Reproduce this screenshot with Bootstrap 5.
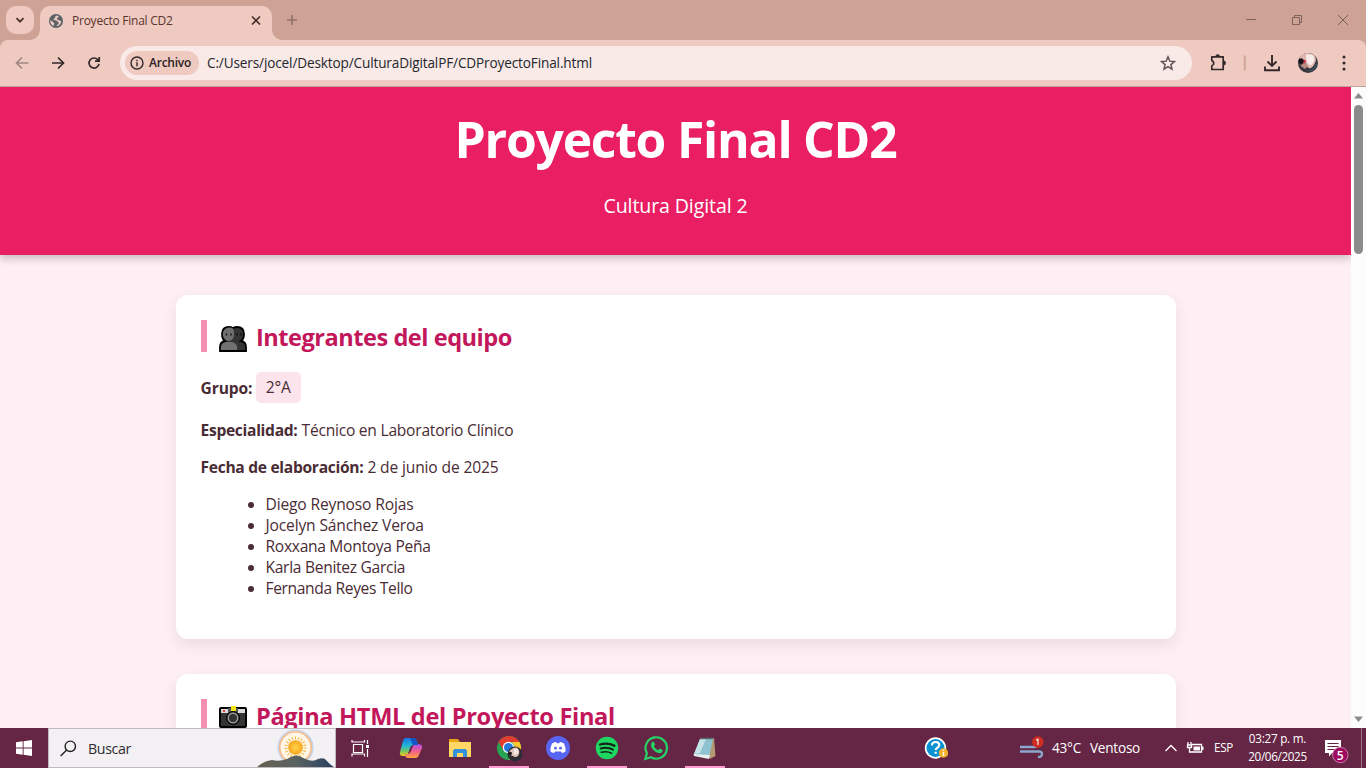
<!DOCTYPE html>
<html lang="es">
<head>
<meta charset="utf-8">
<title>Proyecto Final CD2</title>
<link rel="stylesheet" href="https://cdn.jsdelivr.net/npm/bootstrap@5.3.0/dist/css/bootstrap.min.css">
<style>
body{font-family:"Open Sans","Noto Sans",sans-serif;width:1366px;height:768px;overflow:hidden;color:#4a2c35;font-size:15.6px;line-height:21px}
svg{display:block;flex:none}
.fit{white-space:nowrap;display:inline-block}
.t12{letter-spacing:-.12px}
.t15{letter-spacing:-.155px}
.t24{letter-spacing:-.24px}
.t30{letter-spacing:-.3px}
.t36{letter-spacing:-.36px}
.tabstrip{height:40px;background:#cea396;padding-left:6px}
.tab-search{width:28px;height:28px;border-radius:10px;background:#eecac1;margin-top:6px}
.browser-tab{width:232px;height:34px;margin:6px 0 0 6px;background:#eecac1;border-radius:10px 10px 0 0;padding:0 10px 5px 9px;font-size:12px;color:#5b342d;position:relative}
.browser-tab .fit{margin-left:9px}
.browser-tab:before,.browser-tab:after{content:"";position:absolute;bottom:0;width:10px;height:10px}
.browser-tab:before{left:-10px;background:radial-gradient(circle at 0 0,transparent 9.5px,#eecac1 10px)}
.browser-tab:after{right:-10px;background:radial-gradient(circle at 100% 0,transparent 9.5px,#eecac1 10px)}
.new-tab{margin:14px 0 0 14px}
.toolrow{height:47px;background:#eecac1;border-bottom:1px solid #bfa29b;border-radius:8px 8px 0 0}
.strip-bg{background:#cea396}
.omnibox{width:1072px;height:34px;border-radius:17px;background:#f9eae8;font-size:13.6px;color:#23262c;padding:0 16px 0 5px}
.url{margin-left:8px;letter-spacing:-.14px;padding-bottom:1px}
.chip{width:74px;height:24px;border-radius:12px;background:#eecac1;font-size:12px;font-weight:600;color:#2b2123;padding-left:5px}
.chip .fit{margin-left:5px;padding-bottom:1px}
.viewport{height:641px;background:#feeff4}
.content{width:1351px;overflow:hidden}
.hero{height:168px;margin-bottom:40px;background:#ea1e63;color:#fff;box-shadow:0 4px 8px rgba(0,0,0,.2)}
.hero h1{font-size:49.8px;font-weight:700;line-height:68px;margin:0;padding-top:18px;letter-spacing:-1.22px}
.hero p{font-size:19.6px;line-height:28px;margin:19px 0 0}
.sheet{width:1000px;background:#fff;border-radius:12px;padding:25px;margin:0 auto 35px;box-shadow:0 6px 15px rgba(0,0,0,.08)}
.sheet h2{border-left:6px solid #f48fb1;height:32px;padding-left:12px;margin:0 0 20px;font-size:23.6px;font-weight:700;color:#c2185b;line-height:35px}
.sheet h2 .team{letter-spacing:-.484px}
.sheet h2 .pagina{letter-spacing:-.328px}
.sheet h2 svg{margin:6px 9.4px 0 0}
.sheet p{margin:0 0 16px}
.sheet b{font-weight:700}
.grp-row{height:32px}
.grp{background:#fce4ec;border-radius:5px;height:31px;width:45px;margin:0 0 1px 3.4px}
.sheet ul{padding-left:65px;margin:0 0 15px}
.scroller{width:15px;background:#fcfcfc}
.thumb{width:9px;height:149px;border-radius:5px;background:#8b8b8b}
.taskbar{height:40px;background:#652544;color:#fff}
.searchbox{width:288px;background:#f3f1f3;border:1px solid #bdb9bd;color:#2e2b30;font-size:14.2px;padding-left:11px}
.searchbox .fit{margin-left:11px}
.app{width:49px;height:40px;position:relative}
.app.open:after{content:"";position:absolute;left:5px;bottom:0;width:40px;height:2px;background:#ff9bd2}
.wind{margin-left:71px}
.weather{font-size:13.6px;margin-left:7px;width:112px;gap:9px;padding-bottom:1px}
.lang{font-size:11.7px;width:34px;padding-bottom:1px}
.clock{font-size:11.7px;line-height:18px;width:59px;padding-top:1px}
</style>
<script src="https://cdn.jsdelivr.net/npm/bootstrap@5.3.0/dist/js/bootstrap.bundle.min.js"></script>
</head>
<body>
<div class="tabstrip d-flex">
  <div class="tab-search d-flex align-items-center justify-content-center"><svg width="10" height="10" fill="none" stroke="#4b302b" stroke-width="1.8"><path d="M1.5 3.2 5 6.7 8.500 3.200"/></svg></div>
  <div class="browser-tab d-flex align-items-center">
    <svg width="14" height="14" viewBox="0 0 14 14"><circle cx="7" cy="7" r="7" fill="#5c6268"/><path d="M7.800 1.500c-.5 1-2.300 1-2 2.400.2 1-1.600 1-1.600 2.100 1 .7 3.100-.2 3.800 1 .5 1 1.800.7 1.700 1.900-.2 1.500-1.800 1.600-2.300 3.400 2.500-.2 4.800-2.300 4.900-5.200-1.200.3-1.500-.8-2.600-1-1.300-.2-2-.7-1.700-1.800.3-1 1.800-.6 1.800-1.900-.7-.6-1.200-.9-2-.9ZM1.400 6.200c.8.4 1.700.6 2.200 1.500.6.9 1.600.8 1.600 1.900 0 .9-.6 1.400-.4 2.500C2.500 11.300 1 8.900 1.400 6.200Z" fill="#eecac1"/></svg>
    <span class="fit t24">Proyecto Final CD2</span>
    <svg class="ms-auto" width="12" height="12" fill="none" stroke="#4b302b" stroke-width="1.700"><path d="m2 1.500 8 8M10 1.500l-8 8"/></svg>
  </div>
  <svg class="new-tab" width="12" height="12" stroke="#927169" stroke-width="1.600"><path d="M6 1v10M1 6h10"/></svg>
  <svg class="ms-auto" width="126" height="40" fill="none" stroke="#7c625b" stroke-width="1"><path d="M6 19.500h10M52.500 17.500h7v7h-7zM54.500 17.500v-2h7v7h-2M98 15l10 10M108 15 98 25"/></svg>
</div>
<div class="strip-bg"><div class="toolrow d-flex align-items-center">
  <svg width="120" height="46" fill="none" stroke="#33282a" stroke-width="1.700"><path d="M28.500 23H17M22 17.500 16.500 23l5.500 5.500" stroke="#a18984"/><path d="M52 23h11.500M58 17.500l5.500 5.500-5.500 5.500"/><path d="M98.200 20.200A5 5 0 1 0 99 23.800M99.200 17v4.200H95"/></svg>
  <div class="omnibox d-flex align-items-center">
    <div class="chip d-flex align-items-center"><svg width="14" height="14" fill="none" stroke="#33282a" stroke-width="1.400"><circle cx="7" cy="7" r="6"/><path d="M7 6.200v4M7 3.700v1.500"/></svg><span class="fit t24">Archivo</span></div>
    <span class="fit url">C:/Users/jocel/Desktop/CulturaDigitalPF/CDProyectoFinal.html</span>
    <svg class="ms-auto" width="16" height="16" fill="none" stroke="#5a5053" stroke-width="1.400"><path d="m8 1.800 1.800 4.300 4.700.4-3.600 3.100 1.100 4.600-4-2.500-4 2.500 1.100-4.600-3.600-3.100 4.700-.4Z"/></svg>
  </div>
  <svg width="174" height="46" viewBox="1192 40 174 46" fill="none"><path d="M1211.800 56.800h11.400v12.700h-11.400v-3.700a2.700 2.700 0 0 0 0-5.200Z" stroke="#33282a" stroke-width="1.700" stroke-linejoin="round"/><path d="M1215.700 56.500a2 2 0 0 1 4 0zM1223.500 60.800a2.200 2.200 0 0 1 0 4.400z" fill="#33282a" stroke="#33282a" stroke-width=".5"/><path d="M1244.800 55.500v15" stroke="#d4a69b" stroke-width="2"/><path d="M1272 55v11M1267.500 61.500l4.500 4.500 4.500-4.500M1265 66.500v3.800h14v-3.800" stroke="#33282a" stroke-width="1.900"/><circle cx="1308" cy="63" r="10" fill="#38383e"/><path d="M1300 57q3-4 8-4 8 1 8 7-1 5-5 8-3 1-4-2-5 1-7-3Z" fill="#dfb6b0"/><path d="M1306 54.500q8-1 8.500 4-.5 6-4.500 7-4-2-4-11" fill="#f8eae7"/><path d="M1300 64l5-3 3 5-3 3q-4-2-5-5" fill="#b98c84"/><path d="M1298 61q2-4 5-2l2 3-4 3Z" fill="#151318"/><path d="M1304 59.500l2 1-1 3-2-1z" fill="#c5304c"/><path d="M1307 71q8-1 9-9l1 4q-3 6-10 5" fill="#395064"/><g fill="#33282a"><circle cx="1344" cy="57" r="1.500"/><circle cx="1344" cy="63" r="1.500"/><circle cx="1344" cy="69" r="1.500"/></g></svg>
</div></div>
<div class="viewport d-flex overflow-hidden">
  <main class="content">
    <header class="hero text-center"><h1>Proyecto Final CD2</h1><p><span class="fit t12">Cultura Digital 2</span></p></header>
    <section class="sheet">
      <h2 class="d-flex"><svg width="28" height="26" viewBox="0 0 28 26"><path d="M1 25v-4q0-5 5-6-3-2-3-7 0-7 7-7 2 0 4 1 2-1 4-1 7 0 7 7 0 5-3 7 5 1 5 6v4Z" fill="#343434" stroke="#000" stroke-width="1.800"/><path d="M13.500 2Q10 .8 7 2.500 3 5 4 10q2 5 6 5 5-1 5-7 0-4-1.500-6M2 24q-1-7 5-8h6q6 1 5 8Z" fill="#707070"/><path d="M7.500 7.500v2M12 7.500v2M18 7.500v2M22 7.500v2" stroke="#111" stroke-width="1.500"/></svg><span class="fit team">Integrantes del equipo</span></h2>
      <p class="d-flex align-items-center grp-row"><b class="fit t12">Grupo:</b><span class="grp d-flex align-items-center justify-content-center"><span class="fit t15">2°A</span></span></p>
      <p><b class="fit t30">Especialidad:</b> <span class="fit t24">Técnico en Laboratorio Clínico</span></p>
      <p><b class="fit t30">Fecha de elaboración:</b> <span class="fit t15">2 de junio de 2025</span></p>
      <ul><li><span class="fit t15">Diego Reynoso Rojas</span></li><li><span class="fit t15">Jocelyn Sánchez Veroa</span></li><li><span class="fit t30">Roxxana Montoya Peña</span></li><li><span class="fit t30">Karla Benitez Garcia</span></li><li><span class="fit t36">Fernanda Reyes Tello</span></li></ul>
    </section>
    <section class="sheet">
      <h2 class="d-flex"><svg width="28" height="23" viewBox="0 -1 28 23"><rect x="1" y="2" width="26" height="19" rx="1" fill="#353535" stroke="#000" stroke-width="2"/><path d="M2 3h24v4H2z" fill="#d8d8d8"/><path d="M9 2h10v5H9z" fill="#555"/><path d="M12 0h5v5h-5z" fill="#f4e51b"/><path d="M4 4h2v2H4z" fill="#e34545"/><circle cx="14" cy="12" r="6.500" fill="#222" stroke="#050505"/><circle cx="14" cy="12" r="4.800" fill="#333" stroke="#aaa" stroke-width="1.200"/></svg><span class="fit pagina">Página HTML del Proyecto Final</span></h2>
    </section>
  </main>
  <div class="scroller d-flex flex-column align-items-center"><svg width="15" height="18"><path d="M3 11.500h9L7.500 6Z" fill="#8b8b8b"/></svg><div class="thumb"></div><svg class="mt-auto" width="15" height="18"><path d="M3 6.500h9L7.500 12Z" fill="#8b8b8b"/></svg></div>
</div>
<footer class="taskbar d-flex">
  <svg width="48" height="40" fill="#fff"><path d="m16 14.300 6.700-1v6.300H16zM23.600 13.200 32 12v7.600h-8.400zM16 20.500h6.700v6.300l-6.700-1zM23.600 20.500H32V28l-8.400-1.200z"/></svg>
  <div class="searchbox d-flex align-items-center"><svg width="17" height="17" fill="none" stroke="#222" stroke-width="1.400"><circle cx="10.300" cy="6.300" r="5.200"/><path d="m6.600 10-6 6"/></svg><span class="fit t36">Buscar</span>
    <svg class="ms-auto" width="80" height="38" viewBox="255 729 80 38"><defs><linearGradient id="hill"><stop stop-color="#66604f"/><stop offset=".5" stop-color="#596260"/><stop offset="1" stop-color="#243f62"/></linearGradient><radialGradient id="sun"><stop stop-color="#ffd34c"/><stop offset="1" stop-color="#f8a51d"/></radialGradient></defs><circle cx="295.500" cy="747.500" r="17.300" fill="#fdf3df" stroke="#c4d4ee" stroke-width="1.500"/><circle cx="295.500" cy="747.500" r="15.800" fill="#fff6e8" stroke="#f3b988" stroke-width="1.600"/><circle cx="295.500" cy="747.500" r="9.500" fill="none" stroke="#f6b335" stroke-width="3" stroke-dasharray="1 2.140"/><circle cx="295.500" cy="747.500" r="7.300" fill="url(#sun)"/><path d="M256 768q7-7 16-8 7 2 15-1 8-5 12-3l9 4q6 2 10-1 6-2 8 1 5 6 10 8Z" fill="url(#hill)"/></svg></div>
  <svg width="50" height="40" fill="none" stroke="#fff" stroke-width="1.200"><path d="M17.500 16.500h9v8h-9zM16 12v2h12.500v-2M16 28.500V26h12.500v2.500M31.500 12v4M31.500 21v8"/><path d="M30 17h3v3h-3z" fill="#fff" stroke="none"/></svg>
  <div class="app"><svg width="49" height="40" viewBox="386 728 49 40"><defs><linearGradient id="ca" x2="0" y2="1"><stop stop-color="#1976e7"/><stop offset=".45" stop-color="#22b8d5"/><stop offset=".75" stop-color="#7cc75a"/><stop offset="1" stop-color="#f8c71a"/></linearGradient><linearGradient id="cb" x2="0" y2="1"><stop stop-color="#a94fe8"/><stop offset=".5" stop-color="#f15d91"/><stop offset="1" stop-color="#ffa33d"/></linearGradient></defs><path d="M405 738h9q2 0 3 4l1 3h-5q-2 0-3 3l-2 6q-1 2-3 2h-2q-4 0-3-4l3-11q1-3 2-3" fill="url(#ca)"/><path d="M416 758h-8q-3 0-3-4h3q2 0 3-3l2-5q1-2 4-2h2q4 1 3 4l-3 7q-1 3-3 3" fill="url(#cb)"/><path d="M410 738h4q2 0 3 4l1 3h-5Z" fill="#1455c5"/></svg></div>
  <div class="app"><svg width="49" height="40" viewBox="435 728 49 40"><path d="M449 739h9l2 3h10v12h-21z" fill="#e6a414"/><path d="M449 742h22v15h-22z" fill="#ffd765"/><path d="M453 757v-6q0-2 2-2h10q2 0 2 2v6h-4v-4h-6v4Z" fill="#3592da"/></svg></div>
  <div class="app open"><svg width="49" height="40" viewBox="484 728 49 40"><circle cx="509" cy="748" r="12" fill="#28a353"/><path d="M498.600 742A12 12 0 0 1 519.400 742H509l-5.200 9Z" fill="#e43c2e"/><path d="M519.400 742A12 12 0 0 1 509 760l5.200-9Q516 746 512 742Z" fill="#fbc92e"/><circle cx="508.500" cy="747.500" r="5.700" fill="#fff"/><circle cx="508.500" cy="747.500" r="4.500" fill="#2477df"/><circle cx="515" cy="754" r="7.500" fill="#302d34"/><path d="M509 752q3-5 8-4.500 4 4 1 8.500-3 2-5 0l-4-1" fill="#e1c4b8"/><path d="M514 748.500q5 0 4 4-2 3-4 2z" fill="#f6e9e4"/><path d="M508 754q2-4 4-1l-1 3Z" fill="#17151a"/></svg></div>
  <div class="app"><svg width="49" height="40" viewBox="533 728 49 40"><circle cx="558" cy="748" r="12" fill="#5865f2"/><path d="M552 743.500q2-1.500 4-1.500l.7 1.200h2.600L560 742q2 0 4 1.500 2 4 1.500 8-1.500 1.200-3.500 1.500l-1-1.500h-6l-1 1.500q-2-.3-3.500-1.500-.5-4 1.500-8" fill="#fff"/><circle cx="555.500" cy="748.200" r="1.400" fill="#5865f2"/><circle cx="560.500" cy="748.200" r="1.400" fill="#5865f2"/></svg></div>
  <div class="app open"><svg width="49" height="40" viewBox="582 728 49 40" fill="none" stroke="#152318" stroke-linecap="round"><circle cx="607" cy="748" r="11.200" fill="#1ed760" stroke="none"/><path d="M600 744.500q8-2.200 14.500 1.300" stroke-width="2.300"/><path d="M600.700 748.500q7-1.800 12.300 1.200" stroke-width="1.900"/><path d="M601.300 752.200q6-1.400 10.300 1" stroke-width="1.600"/></svg></div>
  <div class="app"><svg width="49" height="40" viewBox="631 728 49 40"><path d="m645.300 759 1.600-5.800A10.700 10.700 0 1 1 651 757.300Z" fill="none" stroke="#27d366" stroke-width="2.200"/><path d="M652 742q1-1 2 .1l1.100 2.600-1.200 1.600q1.500 2.900 4.300 4l1.500-1.800 3 1.400q0 3-3.200 3.300-4-.4-6.800-4-3-3.500-.7-7.200" fill="#27d366"/></svg></div>
  <div class="app open"><svg width="49" height="40" viewBox="680 728 49 40"><path d="m701 739 13-1 1.500 18-5.500 3Z" fill="#b39a72"/><path d="m700 739 13 0-4 19-15-4Z" fill="#8fc2d0"/><path d="m700 739 6 0-6 14-6 1Z" fill="#c5e3e8"/><path d="m693.500 754 16.500 1-1 4-15-3Z" fill="#e8eef0"/><path d="M700 738.500h13" stroke="#59676c" stroke-width="1.500"/></svg></div>
  <svg class="ms-auto" width="24" height="40" viewBox="924 728 24 40"><circle cx="935.500" cy="748" r="10.700" fill="#fff"/><circle cx="935.500" cy="748" r="9" fill="#0a91d2"/><path d="M932 745.500q0-3.500 3.700-3.500 3.500 0 3.500 3 0 1.700-1.900 2.700-1.600.9-1.600 2.300M935.700 751.800v2" fill="none" stroke="#fff" stroke-width="2.200"/><circle cx="943.500" cy="753" r="4.700" fill="#f5b32d"/><path d="M943.500 752v4M943.500 749.700v1.200" stroke="#fff" stroke-width="1.400"/></svg>
  <svg class="wind" width="26" height="40" viewBox="1019 728 26 40" fill="none"><path d="M1020 747h14q4 0 4-3M1020 751.500h19q3 0 3 2.500 0 3-4 3" stroke="#8ba7cb" stroke-width="2.300"/><circle cx="1037.800" cy="742" r="5.800" fill="#cf2c22"/><path d="m1036 740.300 2-1.200v6" stroke="#fff" stroke-width="1.100"/></svg>
  <div class="weather d-flex align-items-center"><span class="fit t24">43°C</span><span class="fit t24">Ventoso</span></div>
  <svg width="50" height="40" viewBox="1164 728 50 40" fill="none" stroke="#fff" stroke-width="1.300"><path d="m1165.500 751 5.500-5.500 5.500 5.500"/><path d="M1192 744.500h9.500v7.500H1192"/><path d="M1193.500 746.500h6.500v4h-6.500zM1202 746.500h1.500v3.500h-1.500z" fill="#fff" stroke="none"/><path d="M1188 742v2.500M1191 742v2.500M1187.500 745h4v2.500h-4zM1189.500 748v4h3"/></svg>
  <div class="lang d-flex align-items-center"><span class="fit t30">ESP</span></div>
  <div class="clock d-flex flex-column align-items-center"><span class="fit t24">03:27 p. m.</span><span class="fit t36">20/06/2025</span></div>
  <svg width="59" height="40" viewBox="1307 728 59 40"><path d="M1325 740h16v13h-9l-3 3.500V753h-4z" fill="#fff"/><path d="M1327.500 743.500h11M1327.500 746.500h11M1327.500 749.500h7" stroke="#652544"/><circle cx="1340.300" cy="755" r="7.700" fill="#9c075f" stroke="#c97ca7"/><text x="1340.300" y="759.500" fill="#fff" font-size="12" font-weight="600" text-anchor="middle">5</text><path d="M1361.500 728v40" stroke="#9d7488"/></svg>
</footer>
</body>
</html>
